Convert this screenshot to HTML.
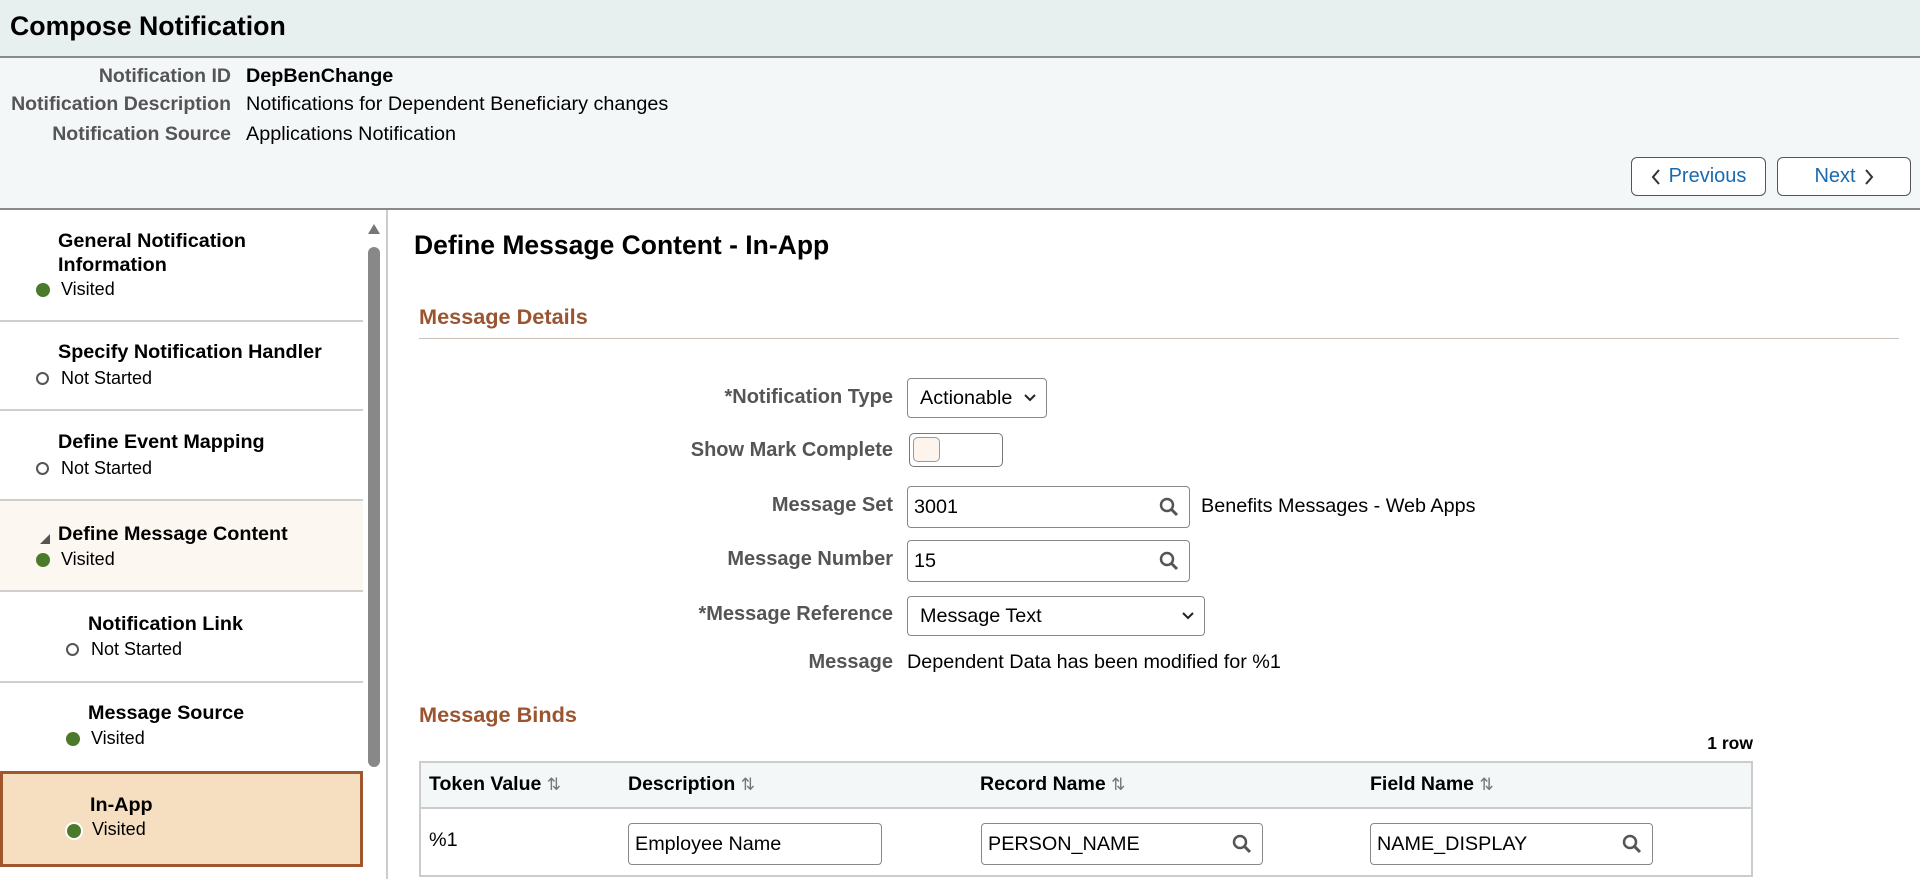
<!DOCTYPE html>
<html><head><meta charset="utf-8"><style>
*{box-sizing:border-box;margin:0;padding:0}
body{width:1920px;height:879px;overflow:hidden;font-family:"Liberation Sans",Arial,sans-serif;background:#fff;color:#000;position:relative}
.a{position:absolute;white-space:nowrap}
.hdr{left:0;top:0;width:1920px;height:58px;background:#e7f0ef;border-bottom:2px solid #8a8a8a}
.info{left:0;top:58px;width:1920px;height:152px;background:#f3f7f8;border-bottom:2px solid #8a8a8a}
.lbl{font-size:19.5px;color:#555;text-align:right;font-weight:bold}
.val{font-size:19.8px;color:#000}
.btn{border:1.5px solid #555;border-radius:6px;background:#fff;color:#1a6ab0;font-size:20px;display:flex;align-items:center;justify-content:center;gap:8px}
.sep{left:0;width:363px;height:2px;background:#cfcfcf}
.nt{font-size:19.8px;font-weight:bold}
.st{font-size:18px}
.dot{width:14px;height:14px;border-radius:50%;background:#4a7a2a}
.odot{width:13px;height:13px;border-radius:50%;border:2px solid #555;background:#fff}
.fl{font-size:20px;font-weight:bold;color:#555;text-align:right;right:1027px}
.inp{border:1.5px solid #888;border-radius:4px;background:#fff;font-size:19.8px;padding-left:6px;display:flex;align-items:center}
.sec{font-size:21.7px;font-weight:bold;color:#9a5530}
.th{font-size:19.5px;font-weight:bold}
.sort{color:#777;font-weight:normal;font-size:17px}
</style></head><body>
<div class="a hdr"></div>
<div class="a" style="left:10px;top:11px;font-size:26.7px;font-weight:bold">Compose Notification</div>
<div class="a info"></div>
<div class="a lbl" style="right:1689px;top:65px">Notification ID</div>
<div class="a val" style="left:246px;top:65px;font-weight:bold">DepBenChange</div>
<div class="a lbl" style="right:1689px;top:93px">Notification Description</div>
<div class="a val" style="left:246px;top:93px">Notifications for Dependent Beneficiary changes</div>
<div class="a lbl" style="right:1689px;top:123px">Notification Source</div>
<div class="a val" style="left:246px;top:123px">Applications Notification</div>
<div class="a btn" style="left:1631px;top:157px;width:135px;height:39px"><svg width="10" height="16"><path d="M8 1L2 8l6 7" stroke="#333" stroke-width="2" fill="none"/></svg>Previous</div>
<div class="a btn" style="left:1777px;top:157px;width:134px;height:39px">Next<svg width="10" height="16"><path d="M2 1l6 7-6 7" stroke="#333" stroke-width="2" fill="none"/></svg></div>

<div class="a" style="left:0;top:500px;width:363px;height:91px;background:#fdf7f2"></div>
<div class="a" style="left:0;top:771px;width:363px;height:96px;background:#f5dfc0;border:3px solid #a0572e"></div>
<div class="a sep" style="top:320px"></div>
<div class="a sep" style="top:409px"></div>
<div class="a sep" style="top:499px"></div>
<div class="a sep" style="top:590px"></div>
<div class="a sep" style="top:681px"></div>
<div class="a" style="left:367px;top:222px;width:14px;height:12px"><svg width="14" height="12"><path d="M7 1L13 11H1z" fill="#777"/></svg></div>
<div class="a" style="left:368px;top:247px;width:12px;height:520px;background:#888;border-radius:6px"></div>
<div class="a" style="left:386px;top:210px;width:2px;height:669px;background:#ccc"></div>

<div class="a nt" style="left:58px;top:229px;line-height:24px">General Notification<br>Information</div>
<div class="a dot" style="left:36px;top:283px"></div><div class="a st" style="left:61px;top:279px">Visited</div>
<div class="a nt" style="left:58px;top:341px">Specify Notification Handler</div>
<div class="a odot" style="left:36px;top:372px"></div><div class="a st" style="left:61px;top:368px">Not Started</div>
<div class="a nt" style="left:58px;top:431px">Define Event Mapping</div>
<div class="a odot" style="left:36px;top:462px"></div><div class="a st" style="left:61px;top:458px">Not Started</div>
<div class="a" style="left:40px;top:531px"><svg width="10" height="10"><path d="M10 0V10H0z" fill="#555"/></svg></div>
<div class="a nt" style="left:58px;top:523px">Define Message Content</div>
<div class="a dot" style="left:36px;top:553px"></div><div class="a st" style="left:61px;top:549px">Visited</div>
<div class="a nt" style="left:88px;top:613px">Notification Link</div>
<div class="a odot" style="left:66px;top:643px"></div><div class="a st" style="left:91px;top:639px">Not Started</div>
<div class="a nt" style="left:88px;top:702px">Message Source</div>
<div class="a dot" style="left:66px;top:732px"></div><div class="a st" style="left:91px;top:728px">Visited</div>
<div class="a nt" style="left:90px;top:794px">In-App</div>
<div class="a dot" style="left:67px;top:824px;box-shadow:0 0 0 2px #fff"></div><div class="a st" style="left:92px;top:819px">Visited</div>

<div class="a" style="left:414px;top:230px;font-size:26.5px;font-weight:bold">Define Message Content - In-App</div>
<div class="a sec" style="left:419px;top:304px">Message Details</div>
<div class="a" style="left:419px;top:338px;width:1480px;height:1px;background:#c8c0ba"></div>

<div class="a fl" style="top:386px">*Notification Type</div>
<div class="a inp" style="left:907px;top:378px;width:140px;height:40px;padding-left:12px">Actionable<svg style="position:absolute;right:10px" width="12" height="8"><path d="M1 1l5 5 5-5" stroke="#222" stroke-width="2" fill="none"/></svg></div>
<div class="a fl" style="top:439px">Show Mark Complete</div>
<div class="a" style="left:909px;top:433px;width:94px;height:34px;border:1.5px solid #777;border-radius:5px;background:#fff"><div style="position:absolute;left:3px;top:3px;width:27px;height:25px;border:1.5px solid #999;border-radius:5px;background:#fdf4ee"></div></div>
<div class="a fl" style="top:494px">Message Set</div>
<div class="a inp" style="left:907px;top:486px;width:283px;height:42px">3001<svg style="position:absolute;right:10px" width="20" height="20"><circle cx="8" cy="8" r="6" stroke="#555" stroke-width="2.5" fill="none"/><path d="M12.5 12.5L18 18" stroke="#555" stroke-width="3"/></svg></div>
<div class="a" style="left:1201px;top:495px;font-size:19.8px">Benefits Messages - Web Apps</div>
<div class="a fl" style="top:548px">Message Number</div>
<div class="a inp" style="left:907px;top:540px;width:283px;height:42px">15<svg style="position:absolute;right:10px" width="20" height="20"><circle cx="8" cy="8" r="6" stroke="#555" stroke-width="2.5" fill="none"/><path d="M12.5 12.5L18 18" stroke="#555" stroke-width="3"/></svg></div>
<div class="a fl" style="top:603px">*Message Reference</div>
<div class="a inp" style="left:907px;top:596px;width:298px;height:40px;padding-left:12px">Message Text<svg style="position:absolute;right:10px" width="12" height="8"><path d="M1 1l5 5 5-5" stroke="#222" stroke-width="2" fill="none"/></svg></div>
<div class="a fl" style="top:651px">Message</div>
<div class="a" style="left:907px;top:651px;font-size:19.8px">Dependent Data has been modified for %1</div>

<div class="a sec" style="left:419px;top:702px">Message Binds</div>
<div class="a" style="right:167px;top:733px;font-size:17.5px;font-weight:bold">1 row</div>
<div class="a" style="left:419px;top:761px;width:1334px;height:116px;border:2px solid #ccc"></div>
<div class="a" style="left:421px;top:763px;width:1330px;height:46px;background:#f3f7f8;border-bottom:2px solid #ccc"></div>
<div class="a th" style="left:429px;top:773px">Token Value <span class="sort">⇅</span></div>
<div class="a th" style="left:628px;top:773px">Description <span class="sort">⇅</span></div>
<div class="a th" style="left:980px;top:773px">Record Name <span class="sort">⇅</span></div>
<div class="a th" style="left:1370px;top:773px">Field Name <span class="sort">⇅</span></div>
<div class="a" style="left:429px;top:829px;font-size:19.8px">%1</div>
<div class="a inp" style="left:628px;top:823px;width:254px;height:42px">Employee Name</div>
<div class="a inp" style="left:981px;top:823px;width:282px;height:42px">PERSON_NAME<svg style="position:absolute;right:10px" width="20" height="20"><circle cx="8" cy="8" r="6" stroke="#555" stroke-width="2.5" fill="none"/><path d="M12.5 12.5L18 18" stroke="#555" stroke-width="3"/></svg></div>
<div class="a inp" style="left:1370px;top:823px;width:283px;height:42px">NAME_DISPLAY<svg style="position:absolute;right:10px" width="20" height="20"><circle cx="8" cy="8" r="6" stroke="#555" stroke-width="2.5" fill="none"/><path d="M12.5 12.5L18 18" stroke="#555" stroke-width="3"/></svg></div>
</body></html>
